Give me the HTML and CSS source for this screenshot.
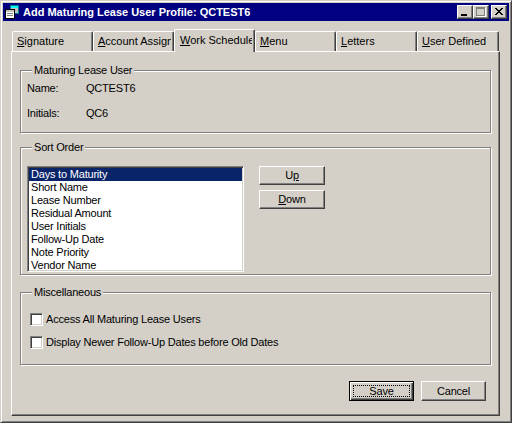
FILE: index.html
```html
<!DOCTYPE html>
<html>
<head>
<meta charset="utf-8">
<title>Add Maturing Lease User Profile</title>
<link rel="stylesheet" href="styles.css">
</head>
<body>
<div class="window">
  <div class="titlebar">
    <svg class="appicon" width="16" height="16" viewBox="0 0 16 16" shape-rendering="crispEdges">
      <rect x="6" y="1" width="9" height="9" fill="#008080"/>
      <rect x="7" y="2" width="7" height="2" fill="#00ffff"/>
      <rect x="7" y="4" width="7" height="5" fill="#c0c0c0"/>
      <rect x="1" y="5" width="10" height="10" fill="#000"/>
      <rect x="2" y="6" width="8" height="2" fill="#c0c0c0"/>
      <rect x="2" y="8" width="8" height="6" fill="#fff"/>
      <rect x="3" y="9" width="6" height="1" fill="#808080"/>
      <rect x="3" y="11" width="6" height="1" fill="#808080"/>
    </svg>
    <span class="title">Add Maturing Lease User Profile: QCTEST6</span>
    <div class="capbtns">
      <div class="capbtn">
        <svg width="14" height="12" viewBox="0 0 14 12" shape-rendering="crispEdges"><rect x="3" y="8" width="6" height="2" fill="#000"/></svg>
      </div>
      <div class="capbtn">
        <svg width="14" height="12" viewBox="0 0 14 12" shape-rendering="crispEdges">
          <rect x="3" y="2" width="9" height="9" fill="#fff"/>
          <rect x="2" y="1" width="9" height="9" fill="#808080"/>
          <rect x="3" y="3" width="7" height="6" fill="#d4d0c8"/>
        </svg>
      </div>
      <div class="capbtn close">
        <svg width="14" height="12" viewBox="0 0 14 12" shape-rendering="crispEdges">
          <path d="M3 2h2v1h1v1h2v-1h1v-1h2v1h-1v1h-1v1h-1v1h1v1h1v1h1v1h-2v-1h-1v-1h-2v1h-1v1h-2v-1h1v-1h1v-1h1v-1h-1v-1h-1v-1h-1z" fill="#000"/>
        </svg>
      </div>
    </div>
  </div>

  <div class="client">
    <div class="tabs">
      <div class="tab"><span class="tablabel"><u>S</u>ignature</span></div>
      <div class="tab"><span class="tablabel"><u>A</u>ccount Assignment</span></div>
      <div class="tab selected"><span class="tablabel"><u>W</u>ork Schedule</span></div>
      <div class="tab"><span class="tablabel"><u>M</u>enu</span></div>
      <div class="tab"><span class="tablabel"><u>L</u>etters</span></div>
      <div class="tab last"><span class="tablabel"><u>U</u>ser Defined</span></div>
    </div>

    <div class="panel">
      <fieldset class="group group-user">
        <legend>Maturing Lease User</legend>
        <div class="field"><span class="flabel">Name:</span><span class="fvalue">QCTEST6</span></div>
        <div class="field"><span class="flabel">Initials:</span><span class="fvalue">QC6</span></div>
      </fieldset>

      <fieldset class="group group-sort">
        <legend>Sort Order</legend>
        <div class="sortrow">
          <div class="listbox">
            <div class="item sel">Days to Maturity</div>
            <div class="item">Short Name</div>
            <div class="item">Lease Number</div>
            <div class="item">Residual Amount</div>
            <div class="item">User Initials</div>
            <div class="item">Follow-Up Date</div>
            <div class="item">Note Priority</div>
            <div class="item">Vendor Name</div>
          </div>
          <div class="sortbtns">
            <div class="btn">U<u>p</u></div>
            <div class="btn"><u>D</u>own</div>
          </div>
        </div>
      </fieldset>

      <fieldset class="group group-misc">
        <legend>Miscellaneous</legend>
        <div class="check"><span class="cbox"></span><span>Access All Maturing Lease Users</span></div>
        <div class="check"><span class="cbox"></span><span>Display Newer Follow-Up Dates before Old Dates</span></div>
      </fieldset>

      <div class="actions">
        <div class="btn default"><span class="focus">Save</span></div>
        <div class="btn">Cancel</div>
      </div>
    </div>
  </div>
</div>
</body>
</html>
```
FILE: styles.css
```css
* { box-sizing: border-box; }
html, body { margin: 0; padding: 0; }
body {
  background: #d4d0c8;
  font-family: "Liberation Sans", Arial, sans-serif;
  font-size: 11px;
  line-height: 13px;
  letter-spacing: -0.2px;
  color: #000;
}
u { text-decoration: underline; text-underline-offset: 1px; }

.window {
  width: 512px;
  height: 423px;
  border: 1px solid;
  border-color: #d4d0c8 #404040 #404040 #d4d0c8;
  box-shadow: inset 1px 1px 0 #fff, inset -1px -1px 0 #808080;
  padding: 2px;
  display: flex;
  flex-direction: column;
  background: #d4d0c8;
}

.titlebar {
  height: 18px;
  flex: none;
  background: #000080;
  color: #fff;
  display: flex;
  align-items: center;
}
.appicon { display: block; flex: none; margin-left: 1px; }
.title {
  margin-left: 3px;
  flex: 1;
  font-weight: bold;
  letter-spacing: 0;
  white-space: nowrap;
}
.capbtns { display: flex; margin-right: 2px; }
.capbtn {
  width: 16px;
  height: 14px;
  background: #d4d0c8;
  border: 1px solid;
  border-color: #fff #404040 #404040 #fff;
  box-shadow: inset -1px -1px 0 #808080;
}
.capbtn svg { display: block; }
.capbtn.close { margin-left: 2px; }

.client {
  flex: 1;
  display: flex;
  flex-direction: column;
  padding: 8px 9px 4px 8px;
}

.tabs {
  display: flex;
  align-items: flex-end;
  height: 22px;
  padding-left: 1px;
  flex: none;
}
.tab {
  width: 81px;
  height: 20px;
  flex: none;
  border-top: 1px solid #fff;
  border-left: 1px solid #fff;
  border-right: 1px solid #404040;
  border-top-left-radius: 2px;
  border-top-right-radius: 2px;
  box-shadow: inset -1px 0 0 #808080;
  padding: 0 2px 0 4px;
  display: flex;
  align-items: center;
  background: #d4d0c8;
  overflow: hidden;
  letter-spacing: 0;
}
.tab.last { width: 82px; }
.tab.selected {
  height: 23px;
  margin-bottom: -1px;
  position: relative;
  z-index: 1;
  padding-left: 5px;
  padding-bottom: 2px;
}
.tablabel {
  display: block;
  flex: 1;
  min-width: 0;
  white-space: nowrap;
  overflow: hidden;
}

.panel {
  flex: 1;
  border-top: 1px solid #fff;
  border-left: 1px solid #fff;
  border-right: 1px solid #404040;
  border-bottom: 1px solid #404040;
  box-shadow: inset -1px -1px 0 #808080;
  padding: 12px 0 0 8px;
  display: flex;
  flex-direction: column;
}

.group {
  width: 471px;
  margin: 0;
  padding: 0 6px;
  border: 1px solid #808080;
  box-shadow: inset 1px 1px 0 #fff, 1px 1px 0 #fff;
  min-width: 0;
}
.group legend {
  margin-left: 5px;
  padding: 0 2px;
  background: #d4d0c8;
  line-height: 13px;
}

.group-user { padding-top: 5px; padding-bottom: 12px; }
.field { display: flex; }
.field + .field { margin-top: 12px; }
.flabel { width: 59px; }

.group-sort { margin-top: 8px; padding-top: 12px; padding-bottom: 2px; }
.sortrow { display: flex; align-items: flex-start; }
.listbox {
  width: 217px;
  height: 106px;
  background: #fff;
  border: 1px solid;
  border-color: #808080 #fff #fff #808080;
  box-shadow: inset 1px 1px 0 #404040, inset -1px -1px 0 #d4d0c8;
  padding: 1px;
  overflow: hidden;
}
.item { height: 13px; padding-left: 2px; white-space: nowrap; }
.item.sel { background: #0a246a; color: #fff; }
.sortbtns {
  margin-left: 15px;
  display: flex;
  flex-direction: column;
  gap: 5px;
}

.btn {
  width: 66px;
  height: 19px;
  border: 1px solid;
  border-color: #fff #404040 #404040 #fff;
  box-shadow: inset -1px -1px 0 #808080;
  display: flex;
  align-items: center;
  justify-content: center;
  background: #d4d0c8;
}

.group-misc { margin-top: 11px; padding-top: 14px; padding-bottom: 15px; }
.check { display: flex; align-items: center; height: 13px; }
.check + .check { margin-top: 10px; }
.cbox {
  width: 13px;
  height: 13px;
  margin-left: 3px;
  margin-right: 3px;
  background: #fff;
  border: 1px solid;
  border-color: #808080 #fff #fff #808080;
  box-shadow: inset 1px 1px 0 #404040, inset -1px -1px 0 #d4d0c8;
  flex: none;
}

.actions {
  display: flex;
  justify-content: flex-end;
  gap: 7px;
  margin-top: 16px;
  margin-right: 13px;
}
.actions .btn { width: 65px; height: 20px; }
.btn.default {
  border: 1px solid #000;
  box-shadow: inset 1px 1px 0 #fff, inset -1px -1px 0 #404040, inset -2px -2px 0 #808080;
  padding: 3px;
}
.focus {
  flex: 1;
  align-self: stretch;
  border: 1px dotted #000;
  display: flex;
  align-items: center;
  justify-content: center;
}
```
